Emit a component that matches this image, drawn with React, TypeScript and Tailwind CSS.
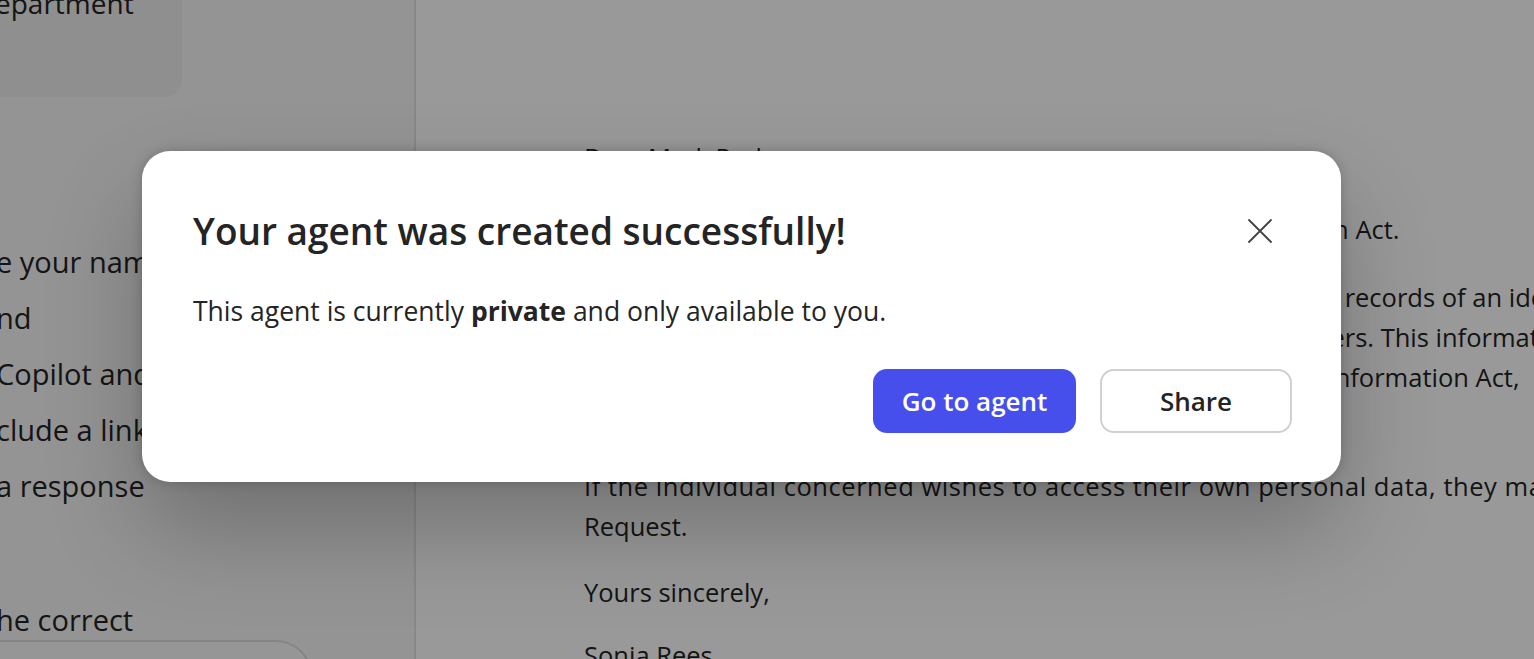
// Agent builder screen with the "agent created" confirmation dialog open.

const instructionLines = [
  'e your name and role',
  'nd',
  'Copilot and',
  'clude a link to',
  'a response',
];

function CloseIcon() {
  return (
    <svg width="24" height="24" viewBox="0 0 24 24" fill="none" stroke="#424242" strokeWidth="1.8" strokeLinecap="round">
      <path d="M1 1L23 23M23 1L1 23" />
    </svg>
  );
}

export default function App() {
  return (
    <div className="relative h-[659px] w-[1534px] overflow-hidden font-['Open_Sans',sans-serif] text-[#242424]">
      <div className="flex h-full">
        {/* Left: configuration panel */}
        <aside className="flex w-[416px] shrink-0 flex-col overflow-hidden border-r-2 border-[#e3e3e3] bg-[#f7f7f7]">
          <div className="-mt-[30px] -ml-[20px] h-[127px] w-[202px] shrink-0 rounded-br-[18px] bg-[#eeeeee] pt-[15px] pl-[15px]">
            <div className="whitespace-nowrap text-[28px] leading-[36px]">epartment</div>
          </div>

          <div className="mt-[137px] -ml-[4px] whitespace-nowrap text-[29px]">
            {instructionLines.map((line) => (
              <div key={line} className="leading-[56px]">
                {line}
              </div>
            ))}
            <div className="mt-[86px] leading-[40px]">he correct</div>
          </div>

          <div className="-ml-[10px] h-[60px] w-[322px] shrink-0 rounded-tr-[36px] border-2 border-[#dedede] bg-[#fafafa]" />
        </aside>

        {/* Right: generated letter preview */}
        <main className="flex-1 overflow-hidden whitespace-nowrap bg-white pt-[137px] pl-[168px] text-[25.5px] leading-[40px]">
          <p className="mb-[32px]">Dear Mark Parker,</p>
          <p className="mb-[28px]">Thank you for the request under the UK Freedom of Information Act.</p>
          <p className="mb-[29px]">
            Unfortunately, we are unable to disclose the requested account records of an identifiable
            <br />
            individual as this would breach the confidentiality of its customers. This information
            <br />
            is consequently exempt under section 40(2) of the Freedom of Information Act,
            <br />
            so we are unable to release it to you.
          </p>
          <p className="mb-[26px]">
            <span className="tracking-[0.55px]">
              If the individual concerned wishes to access their own personal data, they may make a Subject Access
            </span>
            <br />
            Request.
          </p>
          <p className="mb-[23px]">Yours sincerely,</p>
          <p>Sonia Rees</p>
        </main>
      </div>

      {/* Dialog backdrop */}
      <div className="absolute inset-0 bg-black/40 pt-[151px] pl-[142px]">
        <div className="w-[1199px] rounded-[28px] bg-white pt-[56px] pr-[49px] pb-[49px] pl-[51px] shadow-[0_48px_96px_rgba(0,0,0,0.24),0_0_12px_rgba(0,0,0,0.2)]">
          <div className="flex items-center justify-between">
            <h2 className="text-[37px] font-semibold leading-[48px]">Your agent was created successfully!</h2>
            <button className="mr-[12px] flex h-10 w-10 items-center justify-center">
              <CloseIcon />
            </button>
          </div>

          <p className="mt-[38px] text-[26.5px] leading-[36px]">
            This agent is currently <span className="font-bold">private</span> and only available to you.
          </p>

          <div className="mt-[40px] flex justify-end gap-[24px]">
            <button className="flex h-[64px] w-[203px] items-center justify-center rounded-[14px] bg-[#464feb] text-[26px] font-semibold text-white">
              Go to agent
            </button>
            <button className="flex h-[64px] w-[192px] items-center justify-center rounded-[14px] border-2 border-[#d1d1d1] bg-white text-[26px] font-semibold text-[#242424]">
              Share
            </button>
          </div>
        </div>
      </div>
    </div>
  );
}
